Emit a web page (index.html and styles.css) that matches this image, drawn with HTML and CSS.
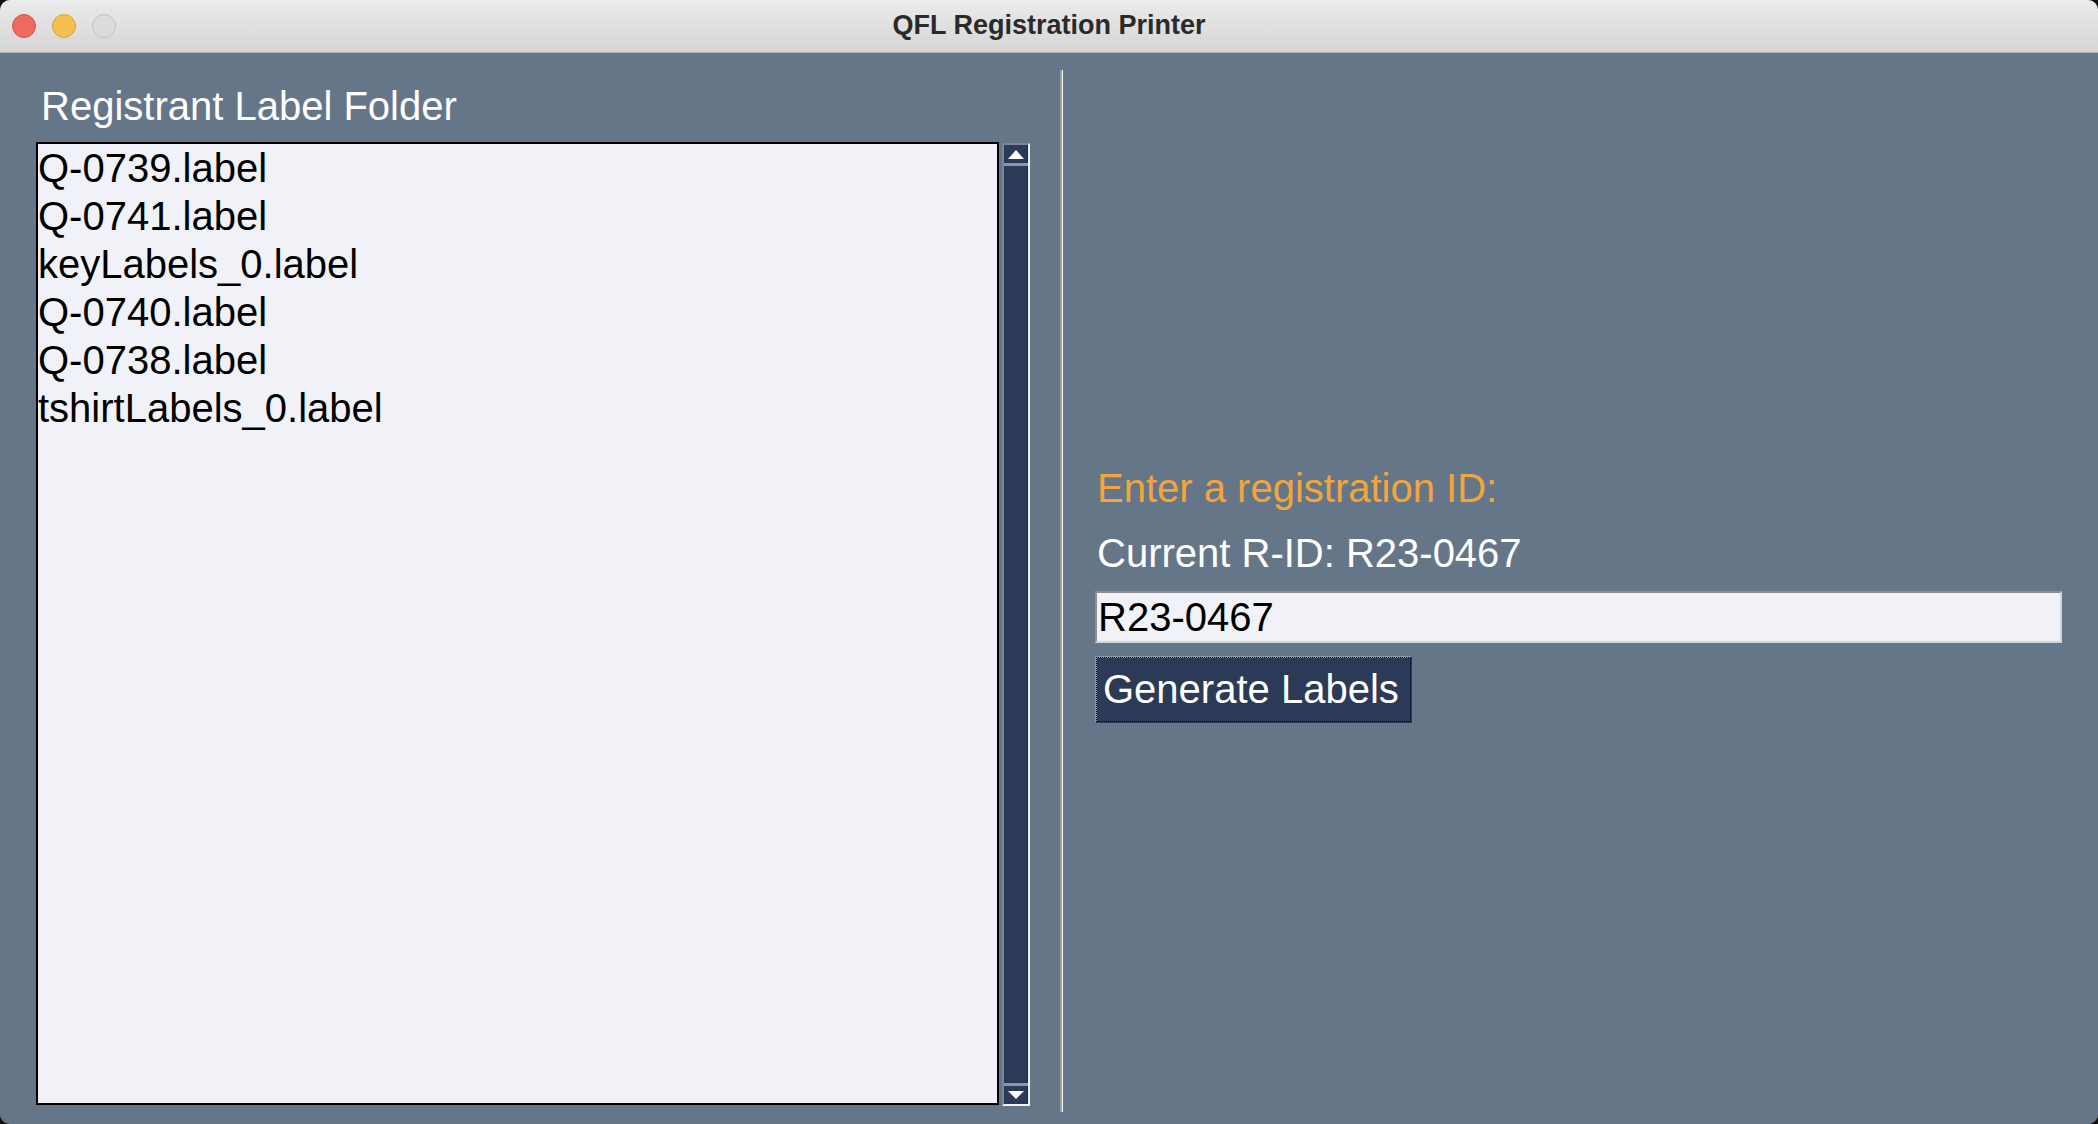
FILE: index.html
```html
<!DOCTYPE html>
<html lang="en">
<head>
<meta charset="utf-8">
<title>QFL Registration Printer</title>
<link rel="stylesheet" href="styles.css">
</head>
<body>
<div class="window">
  <div class="titlebar">
    <div class="lights">
      <span class="light red"></span>
      <span class="light yellow"></span>
      <span class="light grey"></span>
    </div>
    <div class="title">QFL Registration Printer</div>
  </div>
  <div class="main">
    <div class="left">
      <div class="heading">Registrant Label Folder</div>
      <div class="listarea">
        <div class="listbox">
          <div class="item">Q-0739.label</div>
          <div class="item">Q-0741.label</div>
          <div class="item">keyLabels_0.label</div>
          <div class="item">Q-0740.label</div>
          <div class="item">Q-0738.label</div>
          <div class="item">tshirtLabels_0.label</div>
        </div>
        <div class="scrollbar">
          <div class="sb-btn"><span class="tri-up"></span></div>
          <div class="sb-sep"></div>
          <div class="sb-trough"></div>
          <div class="sb-sep"></div>
          <div class="sb-btn"><span class="tri-down"></span></div>
        </div>
      </div>
    </div>
    <div class="divider"></div>
    <div class="right">
      <div class="prompt">Enter a registration ID:</div>
      <div class="current">Current R-ID: R23-0467</div>
      <div class="entry">R23-0467</div>
      <div class="btnrow"><div class="button">Generate Labels</div></div>
    </div>
  </div>
</div>
</body>
</html>
```
FILE: styles.css
```css
html, body {
  margin: 0;
  padding: 0;
  background: #111;
}
.window {
  width: 2098px;
  height: 1124px;
  border-radius: 10px;
  overflow: hidden;
  display: flex;
  flex-direction: column;
  font-family: "Liberation Sans", Arial, sans-serif;
  background: #667689;
}
.titlebar {
  position: relative;
  height: 52px;
  flex: none;
  background: linear-gradient(#ebebeb, #d5d5d5);
  border-bottom: 1px solid #b3b3b3;
  display: flex;
  align-items: center;
}
.lights {
  display: flex;
  gap: 16px;
  padding-left: 12px;
  position: relative;
  z-index: 1;
}
.light {
  width: 22px;
  height: 22px;
  border-radius: 50%;
  display: block;
}
.red { background: #ee6a5f; border: 1px solid #d4564b; }
.yellow { background: #f5bf4f; border: 1px solid #d9a23c; }
.grey { background: #dcdcdc; border: 1px solid #c2c2c2; }
.title {
  position: absolute;
  left: 0;
  right: 0;
  top: 0;
  height: 50px;
  line-height: 50px;
  text-align: center;
  font-weight: 700;
  font-size: 27px;
  color: #2a2a2a;
}
.main {
  flex: 1;
  display: flex;
  background: #667689;
}
.left {
  width: 1030px;
  flex: none;
  padding: 30px 0 0 36px;
  box-sizing: border-box;
}
.heading {
  font-size: 40px;
  line-height: 46px;
  color: #ffffff;
  margin-left: 5px;
  margin-bottom: 13px;
}
.listarea {
  display: flex;
  gap: 3px;
  align-items: flex-start;
}
.listbox {
  width: 964px;
  height: 963px;
  box-sizing: border-box;
  border: 2px solid #000;
  background: #f0f2f7;
  font-size: 40px;
  line-height: 48px;
  color: #000;
}
.item {
  padding-left: 0;
  white-space: nowrap;
}
.scrollbar {
  margin-top: 1px;
  width: 28px;
  height: 963px;
  box-sizing: border-box;
  border-top: 2px solid #7c8696;
  border-left: 2px solid #7c8696;
  border-right: 2px solid #f2f2f2;
  border-bottom: 2px solid #f2f2f2;
  background: #2b3a57;
  box-shadow: inset -1px 0 0 #1e2a42;
  display: flex;
  flex-direction: column;
}
.sb-btn {
  height: 18px;
  flex: none;
  display: flex;
  align-items: center;
  justify-content: center;
}
.sb-sep {
  height: 3px;
  flex: none;
  background: #8c96a5;
}
.sb-trough {
  flex: 1;
}
.tri-up {
  width: 0;
  height: 0;
  border-left: 8px solid transparent;
  border-right: 8px solid transparent;
  border-bottom: 9px solid #ffffff;
}
.tri-down {
  width: 0;
  height: 0;
  border-left: 8px solid transparent;
  border-right: 8px solid transparent;
  border-top: 8px solid #ffffff;
}
.divider {
  flex: none;
  margin: 17px 0 12px 30px;
  width: 1px;
  border-left: 2px solid #a0a0a0;
  background: #f4f4f4;
}
.right {
  flex: 1;
  display: flex;
  flex-direction: column;
  padding: 412px 36px 0 32px;
}
.prompt {
  font-size: 40px;
  line-height: 46px;
  color: #f2a53a;
  margin-left: 2px;
}
.current {
  font-size: 40px;
  line-height: 46px;
  color: #ffffff;
  margin-left: 2px;
  margin-top: 19px;
}
.entry {
  margin-top: 15px;
  height: 52px;
  box-sizing: border-box;
  border-top: 2px solid #8d8f94;
  border-left: 2px solid #8d8f94;
  border-right: 2px solid #d2d5db;
  border-bottom: 2px solid #d2d5db;
  background: #f0f2f7;
  font-size: 40px;
  line-height: 48px;
  color: #000;
  padding-left: 1px;
}
.btnrow {
  display: flex;
  margin-top: 13px;
}
.button {
  border: 2px solid;
  border-color: #8e98a6 #2b3a57 #2b3a57 #8e98a6;
  background: #2b3a57;
  outline: 1px dotted #000;
  outline-offset: -2px;
  color: #ffffff;
  font-size: 40px;
  line-height: 46px;
  padding: 8px 11px 9px 6px;
  white-space: nowrap;
}
```
